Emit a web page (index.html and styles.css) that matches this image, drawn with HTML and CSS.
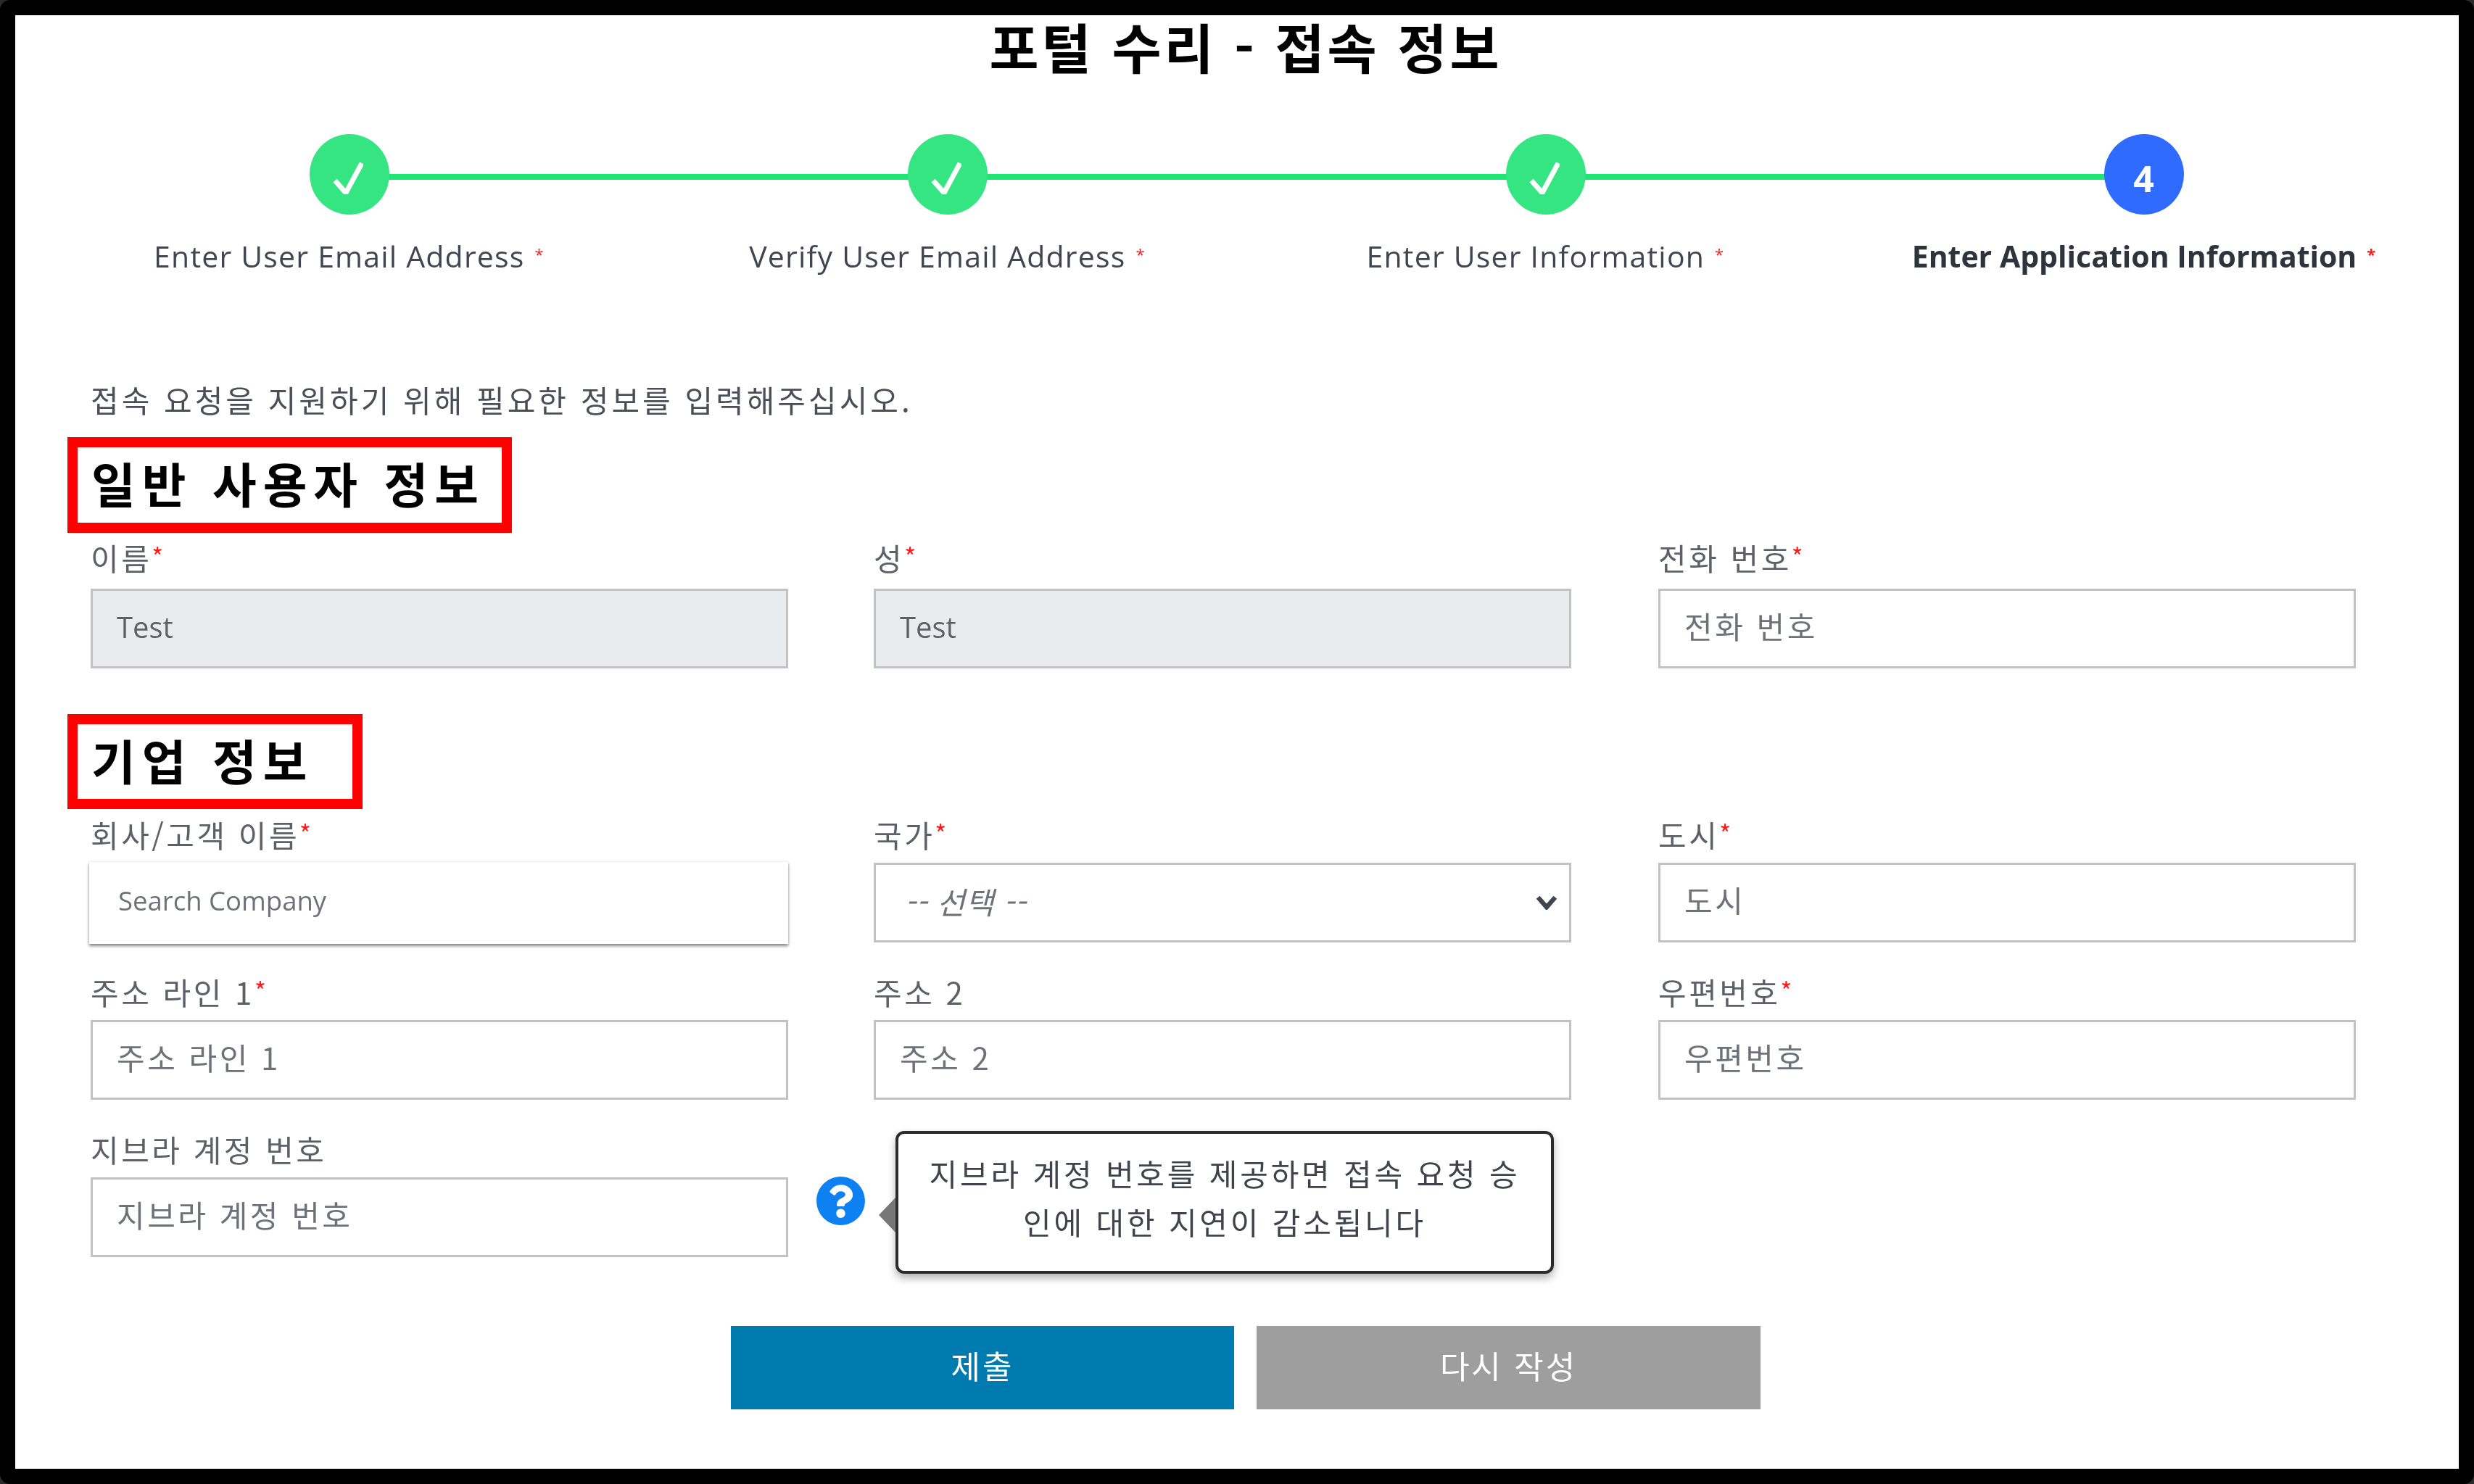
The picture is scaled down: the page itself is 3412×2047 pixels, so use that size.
FILE: index.html
```html
<!DOCTYPE html>
<html lang="ko">
<head>
<meta charset="utf-8">
<title>포털 수리 - 접속 정보</title>
<link rel="stylesheet" href="styles.css">
</head>
<body>
<main class="frame">
  <h1 class="title">포털 수리 - 접속 정보</h1>
  <ol class="stepper">
    <li class="step done">
      <span class="dot"><svg class="check" viewBox="0 0 42 44"><path d="M3 25 L18 42 L40 1"/></svg></span>
      <span class="step-label">Enter User Email Address<i class="req step-req">*</i></span>
    </li>
    <li class="step done">
      <span class="dot"><svg class="check" viewBox="0 0 42 44"><path d="M3 25 L18 42 L40 1"/></svg></span>
      <span class="step-label">Verify User Email Address<i class="req step-req">*</i></span>
    </li>
    <li class="step done">
      <span class="dot"><svg class="check" viewBox="0 0 42 44"><path d="M3 25 L18 42 L40 1"/></svg></span>
      <span class="step-label">Enter User Information<i class="req step-req">*</i></span>
    </li>
    <li class="step current">
      <span class="dot"><span class="num">4</span></span>
      <span class="step-label">Enter Application Information<i class="req step-req">*</i></span>
    </li>
  </ol>
  <form class="form">
    <p class="intro">접속 요청을 지원하기 위해 필요한 정보를 입력해주십시오.</p>
    <h2 class="section">일반 사용자 정보</h2>
    <div class="fields first">
      <div class="field"><label class="label">이름<i class="req">*</i></label><div class="input readonly">Test</div></div>
      <div class="field"><label class="label">성<i class="req">*</i></label><div class="input readonly">Test</div></div>
      <div class="field"><label class="label">전화 번호<i class="req">*</i></label><div class="input"><span class="ph">전화 번호</span></div></div>
    </div>
    <h2 class="section second">기업 정보</h2>
    <div class="fields">
      <div class="field"><label class="label">회사/고객 이름<i class="req">*</i></label><div class="input search"><span class="latin">Search Company</span></div></div>
      <div class="field"><label class="label">국가<i class="req">*</i></label>
        <div class="input select"><em class="ph">-- 선택 --</em><svg class="chevron" viewBox="0 0 32 22"><path d="M3 3 L16 18 L29 3"/></svg></div></div>
      <div class="field"><label class="label">도시<i class="req">*</i></label><div class="input"><span class="ph">도시</span></div></div>
      <div class="field"><label class="label">주소 라인 1<i class="req">*</i></label><div class="input"><span class="ph">주소 라인 1</span></div></div>
      <div class="field"><label class="label">주소 2</label><div class="input"><span class="ph">주소 2</span></div></div>
      <div class="field"><label class="label">우편번호<i class="req">*</i></label><div class="input"><span class="ph">우편번호</span></div></div>
      <div class="field"><label class="label">지브라 계정 번호</label><div class="input"><span class="ph">지브라 계정 번호</span></div>
        <svg class="help" viewBox="0 0 512 512"><path d="M504 256c0 136.997-111.043 248-248 248S8 392.997 8 256C8 119.083 119.043 8 256 8s248 111.083 248 248zM262.655 90c-54.497 0-89.255 22.957-116.549 63.758-3.536 5.286-2.353 12.415 2.715 16.258l34.699 26.31c5.205 3.947 12.621 3.008 16.665-2.122 17.864-22.658 30.113-35.797 57.303-35.797 20.429 0 45.698 13.148 45.698 32.958 0 14.976-12.363 22.667-32.534 33.976C247.128 238.528 216 254.941 216 296v4c0 6.627 5.373 12 12 12h56c6.627 0 12-5.373 12-12v-1.333c0-28.462 83.186-29.647 83.186-106.667 0-58.002-60.165-102-116.531-102zM256 338c-25.365 0-46 20.635-46 46 0 25.364 20.635 46 46 46s46-20.636 46-46c0-25.365-20.635-46-46-46z"/></svg>
        <div class="tooltip">지브라 계정 번호를 제공하면 접속 요청 승인에 대한 지연이 감소됩니다</div>
      </div>
    </div>
    <div class="actions">
      <button class="btn primary" type="button">제출</button>
      <button class="btn secondary" type="button">다시 작성</button>
    </div>
  </form>
</main>
</body>
</html>
```

FILE: styles.css
```css
* { box-sizing: border-box; }
html, body { margin: 0; padding: 0; background: #2b2b2b; }
body { width: 3412px; height: 2047px; overflow: hidden; font-family: "Open Sans", "Noto Sans CJK KR", sans-serif; color: #4a4f57; }

.frame { width: 3412px; height: 2047px; background: #fff; border: 21px solid #000; border-radius: 14px; filter: blur(0.6px); }

.title { margin: 0; height: 88px; padding-left: 24px; text-align: center; letter-spacing: 4px; font: 700 74px/84px "Noto Sans CJK KR", sans-serif; color: #000; }

.stepper { list-style: none; display: flex; margin: 76px 0 0 48px; padding: 0; }
.step { position: relative; width: 825px; display: flex; flex-direction: column; align-items: center; }
.step::after { content: ""; position: absolute; left: 412px; width: 825px; top: 55px; height: 8px; background: #1ee672; }
.step:last-child::after { display: none; }
.dot { position: relative; z-index: 1; width: 110px; height: 111px; border-radius: 50%; display: flex; align-items: center; justify-content: center; color: #fff; }
.done .dot { background: #34e582; }
.current .dot { background: #2f6bff; }
.num { margin-top: 10px; font: 700 50px/1 "Open Sans", sans-serif; }
.check { width: 42px; height: 44px; margin: 10px 4px 0 0; fill: none; stroke: #fff; stroke-width: 7; }
.step-label { margin-top: 35px; letter-spacing: 1.2px; font-size: 41px; line-height: 44px; white-space: nowrap; color: #40464f; }
.current .step-label { letter-spacing: 0; font-weight: 700; color: #2e343c; }
.req { font-style: normal; color: #ff1a1a; font-size: 34px; vertical-align: 6px; line-height: 0; }
.step-req { margin-left: 14px; font-size: 22px; vertical-align: 10px; }

.form { padding: 0 142px 0 72px; }
.intro { margin: 154px 0 0 32px; letter-spacing: 4px; font: 400 42px/44px "Noto Sans CJK KR", sans-serif; color: #4a4f57; }
.section { width: 613px; margin: 30px 0 0; height: 132px; padding: 0 0 0 19px; border: 14px solid #f00; letter-spacing: 9px; font: 700 66px/96px "Noto Sans CJK KR", sans-serif; color: #000; }
.section.second { width: 407px; margin-top: 63px; height: 131px; }

.fields { display: grid; grid-template-columns: 962px 964px 962px; column-gap: 118px; row-gap: 46px; margin: 13px 0 0 32px; }
.fields.first { margin-top: 12px; }
.first .label { margin-bottom: 21px; }
.field { position: relative; }
.label { display: block; height: 44px; margin-bottom: 17px; letter-spacing: 3.5px; font: 400 42px/44px "Noto Sans CJK KR", sans-serif; color: #5c6168; }
.input { display: flex; align-items: center; width: 962px; height: 110px; padding: 0 33px 8px; border: 3px solid #c2c2c2; background: #fff; letter-spacing: 3.5px; font: 400 42px/1 "Noto Sans CJK KR", sans-serif; color: #6c7278; }
.readonly { background: #e9ecef; padding-bottom: 4px; letter-spacing: 0; font-family: "Open Sans", sans-serif; font-size: 40px; color: #5c6168; }
.search { width: 964px; height: 113px; margin: -1px 0 -2px -2px; padding: 0 0 6px 40px; border: 0; box-shadow: 0 3px 4px rgba(0,0,0,.45), 0 0 3px rgba(0,0,0,.12); }
.latin { letter-spacing: 0; font: 400 36.5px/1 "Open Sans", sans-serif; }
.select { justify-content: space-between; padding: 0 12px 4px 40px; }
.ph { color: #6c7278; }
.select .ph { font-style: italic; letter-spacing: 1px; }
.chevron { width: 30px; height: 20px; margin: 4px 4px 0 0; fill: none; stroke: #3f4650; stroke-width: 7; }

.help { position: absolute; left: 1000px; top: 59px; width: 69px; height: 69px; fill: #0d80f2; }
.tooltip { position: absolute; left: 1110px; top: -3px; width: 908px; height: 197px; padding: 20px 34px; border: 4px solid #2c2c2c; border-radius: 12px; background: #fff; box-shadow: 0 6px 12px rgba(0,0,0,.3); text-align: center; word-break: break-all; letter-spacing: 3.8px; font: 400 42px/67px "Noto Sans CJK KR", sans-serif; color: #3f444c; z-index: 2; }
.tooltip::before { content: ""; position: absolute; left: -27px; top: 88px; border-style: solid; border-width: 24px 23px 24px 0; border-color: transparent #777 transparent transparent; }

.actions { display: flex; gap: 31px; margin: 95px 0 0 915px; }
.btn { width: 694px; height: 115px; padding: 0 0 8px; border: 0; color: #fff; letter-spacing: 3px; font: 400 44px/1 "Noto Sans CJK KR", sans-serif; }
.primary { background: #007bb0; }
.secondary { background: #9e9e9e; width: 695px; }
```
